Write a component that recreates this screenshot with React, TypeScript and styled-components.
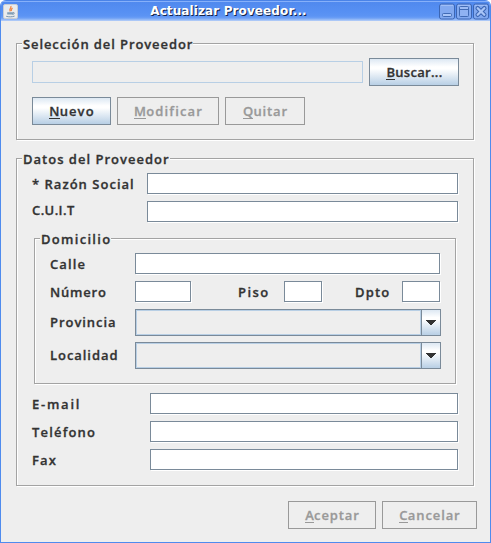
import React from "react";
import styled, { createGlobalStyle, css } from "styled-components";

const GlobalStyle = createGlobalStyle`
  * { box-sizing: border-box; }
  body { margin: 0; background: #fff; }
`;

const Frame = styled.div`
  width: 491px;
  height: 543px;
  display: flex;
  flex-direction: column;
  overflow: hidden;
  border: 1px solid #4f8bee;
  border-top: 0;
  border-radius: 6px 6px 0 0;
  background: #eeeeee;
  color: #333333;
  font: 600 13px/18px "Open Sans", "Noto Sans", sans-serif;
`;

const TitleBar = styled.header`
  flex: none;
  height: 21px;
  display: grid;
  grid-template-columns: 53px 1fr 53px;
  align-items: center;
  padding: 1px 1px 0 2px;
  background: linear-gradient(
    #4a83e8 0, #4a83e8 1px, #86b0fa 1px, #86b0fa 2px, #5089ee 2px,
    #5790f3 12px, #5c94f4 16px, #6c9ff5 18px, #9dbff7 20px, #b9d0f7 21px
  );
`;

const Title = styled.h1`
  margin: 0;
  padding-right: 35px;
  text-align: center;
  white-space: nowrap;
  color: #fff;
  font: bold 12px/18px "DejaVu Sans", sans-serif;
  letter-spacing: 0.11px;
  text-shadow: 1px 1px 0 #14244a;
`;

const WindowControls = styled.div`
  display: flex;
  gap: 1px;
  justify-content: flex-end;
`;

const Glyph = styled.svg`
  display: block;
  flex: none;
`;

const Content = styled.main`
  flex: 1;
  display: flex;
  flex-direction: column;
  padding: 22px 16px 0 15px;
  -webkit-text-stroke-width: 0.3px;
`;

const Group = styled.section<{ $inner?: boolean }>`
  flex: none;
  display: flex;
  flex-direction: column;
  border: 1px solid #a3a3a3;
  box-shadow: 1px 1px 0 #fff, inset 1px 1px 0 #fff;
  ${({ $inner }) =>
    $inner
      ? css`
          width: 422px;
          height: 146px;
          margin: 16px 0 9px 2px;
          padding: 0 0 0 15px;
        `
      : css`
          width: 458px;
          padding: 0 15px;
        `}
`;

const SelectionGroup = styled(Group)`
  height: 97px;
`;

const DataGroup = styled(Group)`
  height: 328px;
  margin-top: 18px;
`;

const Legend = styled.h2<{ $track: number; $drop?: number }>`
  align-self: flex-start;
  height: 18px;
  margin: -10px 0 0 -10px;
  padding: ${({ $drop = 0 }) => $drop}px 0 0 1px;
  background: #eeeeee;
  font: inherit;
  white-space: nowrap;
  letter-spacing: ${({ $track }) => $track}px;
`;

const SearchRow = styled.div`
  display: flex;
  gap: 6px;
  margin-top: 6px;
`;

const SearchField = styled.div`
  flex: none;
  width: 331px;
  height: 22px;
  margin-top: 3px;
  border: 1px solid #b8cfe5;
`;

const ButtonRow = styled.div`
  display: flex;
  gap: 6px;
  margin-top: 11px;
`;

const FooterRow = styled(ButtonRow)`
  margin: 15px -3px 0 0;
  justify-content: flex-end;
`;

const Button = styled.button<{ $width: number; $track?: number }>`
  flex: none;
  width: ${({ $width }) => $width}px;
  height: 28px;
  padding: 0 0 1px 1px;
  border: 1px solid #7a8a99;
  border-radius: 0;
  background: linear-gradient(#dde8f3 0, #fff 30%, #fff 38%, #b8cfe5 100%);
  color: #333;
  font: inherit;
  letter-spacing: ${({ $track = 0.9 }) => $track}px;
  white-space: nowrap;

  &:disabled {
    border-color: #999;
    background: #eeeeee;
    color: #999;
  }
`;

const Mnemonic = styled.span`
  border-bottom: 1px solid currentColor;
  display: inline-block;
  height: 17px;
  line-height: 18px;
  letter-spacing: 0.2px;
`;

const FormRow = styled.div<{ $top?: number; $tall?: boolean }>`
  display: flex;
  align-items: center;
  height: ${({ $tall }) => ($tall ? 27 : 21)}px;
  margin-top: ${({ $top = 7 }) => $top}px;
`;

const Label = styled.label<{ $width: number; $track: number; $raise?: number }>`
  flex: none;
  width: ${({ $width }) => $width}px;
  height: 18px;
  margin-bottom: ${({ $raise = 0 }) => $raise}px;
  white-space: nowrap;
  letter-spacing: ${({ $track }) => $track}px;
`;

const Field = styled.input<{ $width: number }>`
  flex: none;
  width: ${({ $width }) => $width}px;
  height: 21px;
  margin: 0;
  padding: 0 2px;
  border: 1px solid #7a8a99;
  border-radius: 0;
  outline: 0;
  background: #fff;
  box-shadow: 1px 1px 0 #fff;
  font: inherit;
`;

const Spacer = styled.span<{ $width: number }>`
  flex: none;
  width: ${({ $width }) => $width}px;
`;

const ComboBox = styled.div`
  display: flex;
  width: 306px;
  height: 27px;
  border: 1px solid #7a8a99;
`;

const ComboValue = styled.div`
  flex: 1;
  border: 1px solid #b8cfe5;
`;

const ComboArrow = styled.div`
  width: 19px;
  display: flex;
  justify-content: center;
  padding-top: 10px;
  border-left: 1px solid #7a8a99;
  background: linear-gradient(#dde8f3 0, #fff 30%, #fff 38%, #b8cfe5 100%);
`;

function JavaIcon() {
  return (
    <Glyph width="15" height="15" viewBox="0 0 15 15">
      <rect x=".5" y=".5" width="14" height="14" rx="1.5" fill="#e9ebed" stroke="#c9cdd3" />
      <path d="M7.8 2C9 4 5.6 4.5 7.2 7.4M9.6 4.2C7.7 5.2 8.2 6 8.4 7.2" fill="none" stroke="#f08a4b" strokeWidth="1.3" />
      <path d="M4.2 8.2h6v2.3h-6z" fill="#7f9db5" />
      <path d="M10 8.6c2-.5 1.6 1.6-.4 1.8M3.2 12.3c2.5.8 6 .7 8.4-.2" fill="none" stroke="#7894ad" />
    </Glyph>
  );
}

function ControlIcon({ kind }: { kind: "minimize" | "maximize" | "close" }) {
  return (
    <Glyph width="16" height="17" viewBox="0 0 16 17">
      <rect x=".5" y="1" width="15" height="15" rx="2" fill="#82a9f0" stroke="#3c66b4" />
      <path d="M2 2.5h12" stroke="#9fbef6" />
      {kind === "minimize" && (
        <rect x="3.5" y="10.5" width="9" height="3" rx="1" fill="#a9c5f7" stroke="#416bb5" />
      )}
      {kind === "maximize" && (
        <>
          <rect x="3.5" y="3.5" width="9" height="10" rx="1" fill="#8fb2f2" stroke="#416bb5" />
          <path d="M4 5h8" stroke="#a9c5f7" />
          <path d="M4 6.5h8" stroke="#416bb5" />
        </>
      )}
      {kind === "close" && (
        <>
          <path d="M4.7 5.2l6.6 6.6M11.3 5.2l-6.6 6.6" stroke="#3c66b4" strokeWidth="4.4" strokeLinecap="round" />
          <path d="M4.7 5.2l6.6 6.6M11.3 5.2l-6.6 6.6" stroke="#a9c5f7" strokeWidth="2.3" strokeLinecap="round" />
        </>
      )}
    </Glyph>
  );
}

function Combo() {
  return (
    <ComboBox>
      <ComboValue />
      <ComboArrow>
        <Glyph width="10" height="5" viewBox="0 0 10 5" shapeRendering="crispEdges">
          <path d="M0 0h10v1H9v1H8v1H7v1H6v1H4V4H3V3H2V2H1V1H0z" fill="#333" />
        </Glyph>
      </ComboArrow>
    </ComboBox>
  );
}

function ActionButton({ text, width, track, disabled }: { text: string; width: number; track?: number; disabled?: boolean }) {
  return (
    <Button $width={width} $track={track} disabled={disabled}>
      <Mnemonic>{text[0]}</Mnemonic>
      {text.slice(1)}
    </Button>
  );
}

export default function App() {
  return (
    <>
      <GlobalStyle />
      <Frame>
        <TitleBar>
          <JavaIcon />
          <Title>Actualizar Proveedor...</Title>
          <WindowControls>
            <ControlIcon kind="minimize" />
            <ControlIcon kind="maximize" />
            <ControlIcon kind="close" />
          </WindowControls>
        </TitleBar>
        <Content>
          <SelectionGroup>
            <Legend $track={0.9} $drop={1}>Selección del Proveedor</Legend>
            <SearchRow>
              <SearchField />
              <ActionButton text="Buscar..." width={90} track={0.3} />
            </SearchRow>
            <ButtonRow>
              <ActionButton text="Nuevo" width={79} track={1.1} />
              <ActionButton text="Modificar" width={102} track={1.15} disabled />
              <ActionButton text="Quitar" width={80} disabled />
            </ButtonRow>
          </SelectionGroup>
          <DataGroup>
            <Legend $track={1} $drop={1}>Datos del Proveedor</Legend>
            <FormRow $top={6}>
              <Label $width={115} $track={1.02}>* Razón Social</Label>
              <Field $width={311} />
            </FormRow>
            <FormRow>
              <Label $width={115} $track={0.4} $raise={3}>C.U.I.T</Label>
              <Field $width={311} />
            </FormRow>
            <Group $inner>
              <Legend $track={1.3} $drop={1}>Domicilio</Legend>
              <FormRow $top={6}>
                <Label $width={85} $track={1.1}>Calle</Label>
                <Field $width={305} />
              </FormRow>
              <FormRow>
                <Label $width={85} $track={0.8}>Número</Label>
                <Field $width={56} />
                <Spacer $width={47} />
                <Label $width={46} $track={1.4}>Piso</Label>
                <Field $width={38} />
                <Spacer $width={33} />
                <Label $width={47} $track={1.2}>Dpto</Label>
                <Field $width={38} />
              </FormRow>
              <FormRow $tall>
                <Label $width={85} $track={0.95} $raise={2}>Provincia</Label>
                <Combo />
              </FormRow>
              <FormRow $tall $top={6}>
                <Label $width={85} $track={0.95} $raise={2}>Localidad</Label>
                <Combo />
              </FormRow>
            </Group>
            <FormRow $top={0}>
              <Label $width={118} $track={1.75}>E-mail</Label>
              <Field $width={308} />
            </FormRow>
            <FormRow>
              <Label $width={118} $track={1.17}>Teléfono</Label>
              <Field $width={308} />
            </FormRow>
            <FormRow>
              <Label $width={118} $track={1.1}>Fax</Label>
              <Field $width={308} />
            </FormRow>
          </DataGroup>
          <FooterRow>
            <ActionButton text="Aceptar" width={88} disabled />
            <ActionButton text="Cancelar" width={95} disabled />
          </FooterRow>
        </Content>
      </Frame>
    </>
  );
}
